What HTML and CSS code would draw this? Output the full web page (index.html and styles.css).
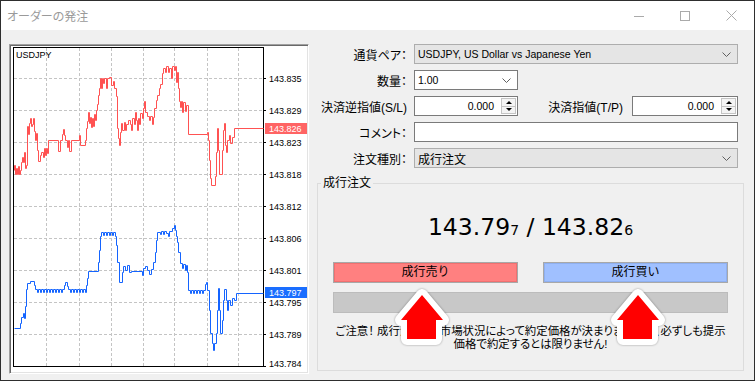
FILE: index.html
```html
<!DOCTYPE html>
<html lang="ja">

<head>
  <meta charset="UTF-8" />
  <title>オーダーの発注</title>
  <link rel="stylesheet" href="styles.css">
</head>

<body>
  <div class="window">
    <!-- タイトルバー -->
    <div class="titlebar">
      <span class="title">オーダーの発注</span>
      <div class="controls">
        <span class="ctrl">
          <svg width="10" height="10" viewBox="0 0 10 10"><path d="M0 5.5H10" /></svg>
        </span>
        <span class="ctrl">
          <svg width="10" height="10" viewBox="0 0 10 10"><rect x="0.5" y="0.5" width="9" height="9" /></svg>
        </span>
        <span class="ctrl">
          <svg width="11" height="11" viewBox="0 0 11 11"><path d="M0.5 0.5L10.5 10.5M10.5 0.5L0.5 10.5" /></svg>
        </span>
      </div>
    </div>

    <div class="content">
      <!-- チャート -->
      <div class="chart-panel">
        <svg class="chart" width="296" height="326" viewBox="11 46 296 326">
          <path class="grid" d="M46.5 48V366M79.5 48V366M111.5 48V366M143.5 48V366M174.5 48V366M207.5 48V366M238.5 48V366
            M14 78.5H263M14 110.5H263M14 142.5H263M14 174.5H263M14 206.5H263M14 238.5H263M14 270.5H263M14 302.5H263M14 334.5H263" />
          <rect class="frame" x="13.5" y="47.5" width="250" height="319" />
          <text class="sym" x="16" y="58">USDJPY</text>

          <g transform="translate(0.5 0.5)">
            <!-- ask -->
            <path class="ask" d="M14 170V165H15V174H16V168H17V174H18V166H19V174H20V170H21V162H22V157H23V162H24V152H25V168H26V165H27V126H28V134H29V123H30V118H31V126H32V124H33V118H34V131H35V140H36V133H37V150H38V161H40V155H41V152H43V157H44V148H45V155H46V148H47V153H48V140H58V151H60V140H62V134H63V129H64V135H65V140H67V147H68V140H69V151H71V140H79V135H80V145H85V140H86V128H87V121H88V112H89V123H90V117H91V127H92V118H93V126H94V114H95V120H96V110H97V104H98V95H99V88H100V78H101V88H102V78H103V83H104V78H106V88H107V78H109V77H111V85H113V81H114V88H116V96H117V128H118V138H119V145H120V132H121V123H122V130H124V122H125V130H126V124H128V120H130V124H131V130H132V118H134V124H135V112H136V120H137V130H138V118H139V124H140V113H142V118H143V108H144V101H145V112H147V116H149V120H150V116H152V124H153V117H154V108H156V100H157V95H159V88H160V84H162V73H163V68H165V72H166V66H168V72H169V68H171V78H172V66H174V70H175V66H176V82H177V72H178V88H179V101H180V107H181V101H182V112H183V102H185V111H186V105H188V134H207V132H208V140H209V160H210V178H211V185H215V176H216V152H217V128H218V150H219V174H222V150H223V130H224V123H225V145H226V152H227V140H229V135H230V143H232V137H234V128H263" />
            <!-- bid -->
            <path class="bid" d="M14 328H20V323H21V317H23V313H24V318H25V306H26V289H27V283H30V281H34V285H35V289H37V292H38V289H40V292H41V289H43V292H44V289H46V292H47V289H49V292H50V289H52V292H53V289H55V292H56V289H58V292H59V289H61V292H62V289H64V285H65V282H67V286H68V289H70V292H71V289H73V292H74V289H76V292H77V289H79V292H80V289H82V292H83V289H85V292H86V285H87V278H88V271H98V262H99V250H100V236H101V232H103V235H104V232H106V235H107V232H109V235H110V232H112V235H113V232H115V236H116V245H117V262H119V282H122V272H123V266H125V270H127V265H129V272H131V271H142V275H143V268H145V266H147V270H149V274H151V269H153V262H155V252H156V240H157V232H160V234H161V231H163V234H164V231H166V233H168V236H169V231H172V228H174V225H175V230H176V236H177V242H178V252H180V263H182V268H183V264H185V270H186V265H187V272H188V290H190V293H191V290H193V293H194V290H196V293H197V290H199V293H200V290H202V293H203V290H205V284H206V282H207V290H209V310H210V333H212V343H213V350H214V343H216V333H217V310H218V288H219V310H220V333H222V320H223V300H224V289H226V300H227V310H228V300H230V305H232V298H234V300H236V293H263" />
          </g>

          <!-- 価格軸 -->
          <path class="tick" d="M264 78.5H266M264 110.5H266M264 142.5H266M264 174.5H266M264 206.5H266M264 238.5H266M264 270.5H266M264 302.5H266M264 334.5H266M264 366.5H266" />
          <g class="axis">
            <text x="269" y="82">143.835</text>
            <text x="269" y="114">143.829</text>
            <text x="269" y="146">143.823</text>
            <text x="269" y="178">143.818</text>
            <text x="269" y="210">143.812</text>
            <text x="269" y="242">143.806</text>
            <text x="269" y="274">143.801</text>
            <text x="269" y="306">143.795</text>
            <text x="269" y="338">143.789</text>
            <text x="269" y="367">143.784</text>
          </g>
          <rect class="tag-ask" x="265" y="123" width="42" height="11" />
          <text class="tag-text" x="269" y="132">143.826</text>
          <rect class="tag-bid" x="265" y="287" width="42" height="11" />
          <text class="tag-text" x="269" y="296">143.797</text>
        </svg>
      </div>

      <!-- 注文フォーム -->
      <div class="order-form">
        <div class="row">
          <span class="label">通貨ペア：</span>
          <div class="field select select-gray">
            <span class="latin">USDJPY, US Dollar vs Japanese Yen</span>
            <svg class="chevron" width="9" height="5" viewBox="0 0 9 5"><polyline points="0.5,0.5 4.5,4.5 8.5,0.5" /></svg>
          </div>
        </div>

        <div class="row">
          <span class="label">数量：</span>
          <div class="field select select-small">
            <span class="latin">1.00</span>
            <svg class="chevron" width="9" height="5" viewBox="0 0 9 5"><polyline points="0.5,0.5 4.5,4.5 8.5,0.5" /></svg>
          </div>
        </div>

        <div class="row">
          <span class="label">決済逆指値(S/L)</span>
          <div class="spin">
            <span class="spin-value latin">0.000</span>
            <span class="spin-btns"><i class="up"></i><i class="down"></i></span>
          </div>
          <span class="label-2">決済指値(T/P)</span>
          <div class="spin spin-tp">
            <span class="spin-value latin">0.000</span>
            <span class="spin-btns"><i class="up"></i><i class="down"></i></span>
          </div>
        </div>

        <div class="row">
          <span class="label">コメント：</span>
          <div class="field input"></div>
        </div>

        <div class="row">
          <span class="label">注文種別：</span>
          <div class="field select select-gray">
            <span>成行注文</span>
            <svg class="chevron" width="9" height="5" viewBox="0 0 9 5"><polyline points="0.5,0.5 4.5,4.5 8.5,0.5" /></svg>
          </div>
        </div>

        <div class="group">
          <div class="group-title">成行注文</div>
          <div class="quote">143.79<small>7</small> / 143.82<small>6</small></div>
          <div class="buttons">
            <div class="btn btn-sell">成行売り</div>
            <div class="btn btn-buy">成行買い</div>
          </div>
          <div class="bar"></div>
          <p class="notice">ご注意！ 成行注文は、市場状況によって約定価格が決まりますので、必ずしも提示<br>価格で約定するとは限りません!</p>
        </div>
      </div>
    </div>

    <!-- 注目の矢印 -->
    <svg class="arrows" width="755" height="381" viewBox="0 0 755 381">
      <polygon points="422,295 443,320 436,320 436,339 407,339 407,320 401,320" />
      <polygon points="638,295 659,320 652,320 652,339 623,339 623,320 617,320" />
    </svg>
  </div>
</body>

</html>
```

FILE: styles.css
```css
* {
  box-sizing: border-box;
}

html,
body {
  margin: 0;
}

body {
  background-color: #f0f0f0;
  font-family: "Liberation Sans", "Noto Sans CJK JP", sans-serif;
  font-size: 12px;
  color: #000;
}

.window {
  position: relative;
  width: 755px;
  height: 381px;
  border: 1px solid #2e2e2e;
  background-color: #f0f0f0;
}

/* タイトルバー */
.titlebar {
  display: flex;
  align-items: center;
  height: 29px;
  background-color: #fff;
}

.title {
  padding-left: 6px;
  color: #9a9a9a;
  font-feature-settings: "palt";
}

.controls {
  display: flex;
  height: 100%;
  margin-left: auto;
}

.ctrl {
  display: flex;
  align-items: center;
  justify-content: center;
  width: 46px;
}

.ctrl svg {
  fill: none;
  stroke: #aaa;
  stroke-width: 1;
}

.content {
  display: flex;
  align-items: flex-start;
  padding: 14px 0 0 8px;
}

/* チャート */
.chart-panel {
  width: 300px;
  height: 330px;
  padding: 1px;
  border: 1px solid;
  border-color: #a0a0a0 #fff #fff #a0a0a0;
  box-shadow: inset 1px 1px #696969, inset -1px -1px #e3e3e3;
  background-color: #fff;
}

.chart {
  display: block;
}

.grid {
  fill: none;
  stroke: #c4c4c4;
  stroke-width: 1;
  stroke-dasharray: 3 2;
}

.frame {
  fill: none;
  stroke: #000;
  stroke-width: 1;
}

.sym,
.axis text,
.tag-text {
  font-family: "Liberation Sans", sans-serif;
  font-size: 9px;
}

.ask,
.bid {
  fill: none;
  stroke-width: 1;
}

.ask {
  stroke: #ff5252;
}

.bid {
  stroke: #1464ff;
}

.tick {
  stroke: #000;
  stroke-width: 1;
}

.tag-ask {
  fill: #ff6464;
}

.tag-bid {
  fill: #1a6eff;
}

.tag-text {
  fill: #fff;
}

/* 注文フォーム */
.order-form {
  width: 427px;
  margin-left: 8px;
}

.row {
  display: flex;
  align-items: center;
  height: 20px;
  margin-bottom: 6px;
  padding-right: 6px;
}

.label {
  width: 90px;
  margin-right: 7px;
  text-align: right;
  white-space: nowrap;
  font-feature-settings: "palt";
}

.label-2 {
  flex: 1;
  padding-right: 9px;
  text-align: right;
  white-space: nowrap;
  font-feature-settings: "palt";
}

.latin {
  font-size: 10.5px;
}

.field {
  display: flex;
  align-items: center;
  flex: 1;
  height: 100%;
  padding: 0 6px 0 3px;
  border: 1px solid #7a7a7a;
  background-color: #fff;
}

.select-gray {
  border-color: #adadad;
  background-color: #e5e5e5;
}

.select-small {
  flex: none;
  width: 104px;
}

.chevron {
  margin-left: auto;
  fill: none;
  stroke: #606060;
}

.spin {
  display: flex;
  width: 104px;
  height: 100%;
  border: 1px solid #7a7a7a;
  background-color: #fff;
}

.spin-tp {
  width: 106px;
}

.spin-value {
  flex: 1;
  padding-right: 6px;
  line-height: 18px;
  text-align: right;
}

.spin-btns {
  display: flex;
  flex-direction: column;
  width: 15px;
  margin: 1px;
  border: 1px solid #c4c4c4;
  background-color: #f4f4f4;
}

.spin-btns i {
  display: flex;
  align-items: center;
  justify-content: center;
  flex: 1;
}

.spin-btns i + i {
  border-top: 1px solid #c4c4c4;
}

.up::before,
.down::before {
  content: "";
  border-left: 3px solid transparent;
  border-right: 3px solid transparent;
}

.up::before {
  border-bottom: 3px solid #000;
}

.down::before {
  border-top: 3px solid #000;
}

/* 成行注文 */
.group {
  height: 188px;
  margin-top: 15px;
  padding: 0 15px;
  border: 1px solid #dcdcdc;
}

.group-title {
  width: fit-content;
  margin: -8px 0 0 -12px;
  padding: 0 2px;
  line-height: 14px;
  background-color: #f0f0f0;
  font-feature-settings: "palt";
}

.quote {
  margin-top: 23px;
  font-family: "DejaVu Sans", sans-serif;
  font-size: 23.5px;
  line-height: 28px;
  text-align: center;
}

.quote small {
  font-size: 14px;
}

.buttons {
  display: flex;
  justify-content: space-between;
  margin-top: 18px;
}

.btn {
  width: 185px;
  height: 21px;
  line-height: 19px;
  text-align: center;
  border: 1px solid #a8a8a8;
}

.btn-sell {
  background-color: #ff8080;
  box-shadow: inset 0 0 0 1px #f07070;
}

.btn-buy {
  background-color: #a0c0ff;
  box-shadow: inset 0 0 0 1px #8fb0f0;
}

.bar {
  height: 21px;
  margin-top: 9px;
  border: 1px solid #bcbcbc;
  background-color: #c8c8c8;
}

.notice {
  margin: 12px -10px 0;
  font-size: 11.4px;
  line-height: 12.5px;
  text-align: center;
  white-space: nowrap;
  font-feature-settings: "palt";
}

/* 矢印 */
.arrows {
  position: absolute;
  top: -1px;
  left: -1px;
  pointer-events: none;
  filter: drop-shadow(0 0 1px rgba(0, 0, 0, 0.35));
}

.arrows polygon {
  fill: #f00;
  stroke: #fff;
  stroke-width: 12;
  stroke-linejoin: round;
  paint-order: stroke;
}
```
